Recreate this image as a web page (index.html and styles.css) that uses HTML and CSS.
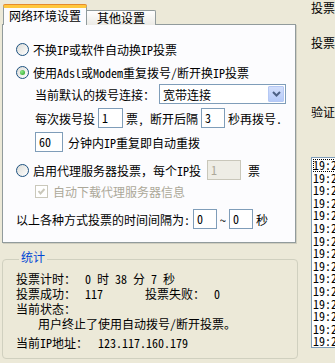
FILE: index.html
```html
<!DOCTYPE html>
<html lang="zh-CN">
<head>
  <meta charset="UTF-8">
  <title>投票设置</title>
  <link rel="stylesheet" href="styles.css">
</head>
<body>
  <div class="window">
    <div class="left">
      <div class="tabs">
        <div class="tab active">网络环境设置</div>
        <div class="tab">其他设置</div>
      </div>

      <div class="panel">
        <div class="row r1">
          <span class="radio"></span>不换IP或软件自动换IP投票
        </div>
        <div class="row r2">
          <span class="radio on"></span>使用Adsl或Modem重复拨号/断开换IP投票
        </div>
        <div class="row r3 indent">
          当前默认的拨号连接：
          <div class="select">
            <span>宽带连接</span>
            <span class="drop">
              <svg width="9" height="6" viewBox="0 0 9 6"><path d="M1 1 L4.5 4.5 L8 1" fill="none" stroke="#4D6185" stroke-width="2"/></svg>
            </span>
          </div>
        </div>
        <div class="row r4 indent">
          每次拨号投<span class="edit w25">1</span>票, 断开后隔<span class="edit w24">3</span>秒再拨号.
        </div>
        <div class="row r5 indent">
          <span class="edit w28 first">60</span>分钟内IP重复即自动重拨
        </div>
        <div class="row r6">
          <span class="radio"></span>启用代理服务器投票，每个IP投<span class="edit w34 off">1</span>票
        </div>
        <div class="row r7 indent">
          <span class="check">
            <svg width="11" height="11" viewBox="0 0 11 11"><path d="M2.5 5 L4.5 7.5 L8.5 3" fill="none" stroke="#CAC8BB" stroke-width="2"/></svg>
          </span>
          <span class="muted">自动下载代理服务器信息</span>
        </div>
        <div class="row r8">
          以上各种方式投票的时间间隔为:<span class="edit w24 gap">0</span>~<span class="edit w24 gap">0</span>秒
        </div>
      </div>

      <fieldset class="stats">
        <legend>统计</legend>
        <div class="line">投票计时：<span class="val">0 时 38 分 7 秒</span></div>
        <div class="line">投票成功：<span class="val num">117</span>投票失败：<span class="val">0</span></div>
        <div class="line">当前状态：</div>
        <div class="line status">用户终止了使用自动拨号/断开投票。</div>
        <div class="line last">当前IP地址：<span class="val ip">123.117.160.179</span></div>
      </fieldset>
    </div>

    <div class="right">
      <div class="label l1">投票网址：</div>
      <div class="label l2">投票编号：</div>
      <div class="label l3">验证码：</div>
      <div class="list">
        <div class="item focus">19:26:41 投票成功</div>
        <div class="item">19:26:35 投票成功</div>
        <div class="item">19:26:29 投票成功</div>
        <div class="item">19:26:22 投票成功</div>
        <div class="item">19:26:16 投票成功</div>
        <div class="item">19:26:10 投票成功</div>
        <div class="item">19:26:03 投票成功</div>
        <div class="item">19:25:57 投票成功</div>
        <div class="item">19:25:51 投票成功</div>
        <div class="item">19:25:44 投票成功</div>
        <div class="item">19:25:38 投票成功</div>
        <div class="item">19:25:32 投票成功</div>
        <div class="item">19:25:25 投票成功</div>
        <div class="item">19:25:19 投票成功</div>
        <div class="item">19:25:13 投票成功</div>
      </div>
    </div>
  </div>
</body>
</html>
```

FILE: styles.css
```css
body {
  margin: 0;
  width: 335px;
  height: 363px;
  overflow: hidden;
  background: #ECE9D8;
  color: #000;
  font-family: "Noto Sans Mono CJK SC", "Noto Sans CJK SC", sans-serif;
  font-size: 12px;
}
.window {
  display: flex;
}
.left {
  flex: none;
  width: 296px;
  margin-left: 2px;
  padding-top: 5px;
}
.tabs {
  display: flex;
  align-items: flex-start;
  height: 20px;
  position: relative;
  z-index: 1;
}
.tab {
  box-sizing: border-box;
  text-align: center;
  white-space: nowrap;
}
.tab.active {
  width: 84px;
  height: 20px;
  margin-left: 1px;
  line-height: 16px;
  background: #FCFCFE;
  border: 1px solid #919B9C;
  border-bottom: none;
  border-top: 3px solid #FFC83C;
  box-shadow: inset 0 0 0 0 #fff, 0 -1px 0 #E68B2C;
  border-radius: 2px 2px 0 0;
}
.tab:not(.active) {
  width: 69px;
  height: 15px;
  margin-top: 5px;
  line-height: 14px;
  background: linear-gradient(#FFFFFF, #ECEBE6);
  border: 1px solid #919B9C;
  border-left: none;
  border-bottom: none;
  border-radius: 0 2px 0 0;
}
.panel {
  box-sizing: border-box;
  width: 294px;
  height: 219px;
  margin-top: -1px;
  padding-top: 14px;
  background: #FCFCFE;
  border: 1px solid #919B9C;
  box-shadow: 1px 1px 0 #D0CEBF;
}
.row {
  display: flex;
  align-items: center;
  height: 20px;
  padding-left: 13px;
  white-space: nowrap;
}
.row.indent { padding-left: 32px; }
.r2 { margin-top: 3px; }
.r3 { margin-top: 2px; }
.r4 { margin-top: 4px; }
.r5 { margin-top: 4px; }
.r6 { margin-top: 8px; }
.r7 { margin-top: 1px; }
.r8 { margin-top: 8px; }

.radio {
  flex: none;
  position: relative;
  box-sizing: border-box;
  width: 13px;
  height: 13px;
  margin-right: 4px;
  border: 1px solid #1C5180;
  border-radius: 50%;
  background: linear-gradient(135deg, #DCDCD7, #FFFFFF);
}
.radio.on::after {
  content: "";
  position: absolute;
  left: 3px;
  top: 3px;
  width: 5px;
  height: 5px;
  border-radius: 50%;
  background: radial-gradient(circle at 35% 35%, #8FE88A, #21A121);
}
.check {
  flex: none;
  display: flex;
  align-items: center;
  justify-content: center;
  box-sizing: border-box;
  width: 13px;
  height: 13px;
  margin-right: 5px;
  border: 1px solid #CAC8BB;
  background: #fff;
}
.muted { color: #ACA899; }

.select {
  display: flex;
  align-items: center;
  justify-content: space-between;
  box-sizing: border-box;
  width: 127px;
  height: 20px;
  margin-left: 4px;
  padding: 0 1px 0 3px;
  background: #fff;
  border: 1px solid #7F9DB9;
}
.drop {
  display: flex;
  align-items: center;
  justify-content: center;
  box-sizing: border-box;
  width: 16px;
  height: 16px;
  background: linear-gradient(#D2DEFB, #B6CBF9);
  border: 1px solid #B5C8F4;
  border-radius: 1px;
}
.edit {
  box-sizing: border-box;
  height: 20px;
  margin: 0 3px;
  padding-left: 3px;
  line-height: 18px;
  background: #fff;
  border: 1px solid #7F9DB9;
}
.edit.first { margin-left: 0; margin-right: 5px; }
.edit.off {
  margin: 0 7px 0 6px;
  color: #ACA899;
  background: #EEEDE5;
  border-color: #C9C7BA;
}
.edit.gap { margin: 0 3px; }
.w24 { width: 24px; }
.w25 { width: 25px; }
.w28 { width: 28px; }
.w34 { width: 34px; }

.stats {
  box-sizing: border-box;
  width: 296px;
  margin: 7px 0 0;
  padding: 3px 0 8px 13px;
  border: 1px solid #D0D0BF;
  border-radius: 4px;
}
.stats legend {
  margin-left: 3px;
  padding: 0 2px 4px;
  line-height: 14px;
  color: #0046D5;
}
.line {
  line-height: 15px;
  white-space: nowrap;
}
.line.status { padding-left: 22px; }
.line.last { margin-top: 4px; }
.val { margin-left: 9px; }
.val.num {
  display: inline-block;
  width: 60px;
}
.val.ip { margin-left: 10px; }

.right {
  flex: none;
  margin-left: 13px;
  padding-top: 1px;
  width: 120px;
}
.label {
  line-height: 14px;
  white-space: nowrap;
}
.l2 { margin-top: 21px; }
.l3 { margin-top: 55px; }
.list {
  box-sizing: border-box;
  height: 191px;
  margin-top: 38px;
  padding: 1px 0 0 1px;
  background: #fff;
  border: 1px solid #7F9DB9;
}
.item {
  line-height: 12.6px;
  white-space: nowrap;
}
.item.focus {
  outline: 1px dotted #000;
  outline-offset: -1px;
}
```
